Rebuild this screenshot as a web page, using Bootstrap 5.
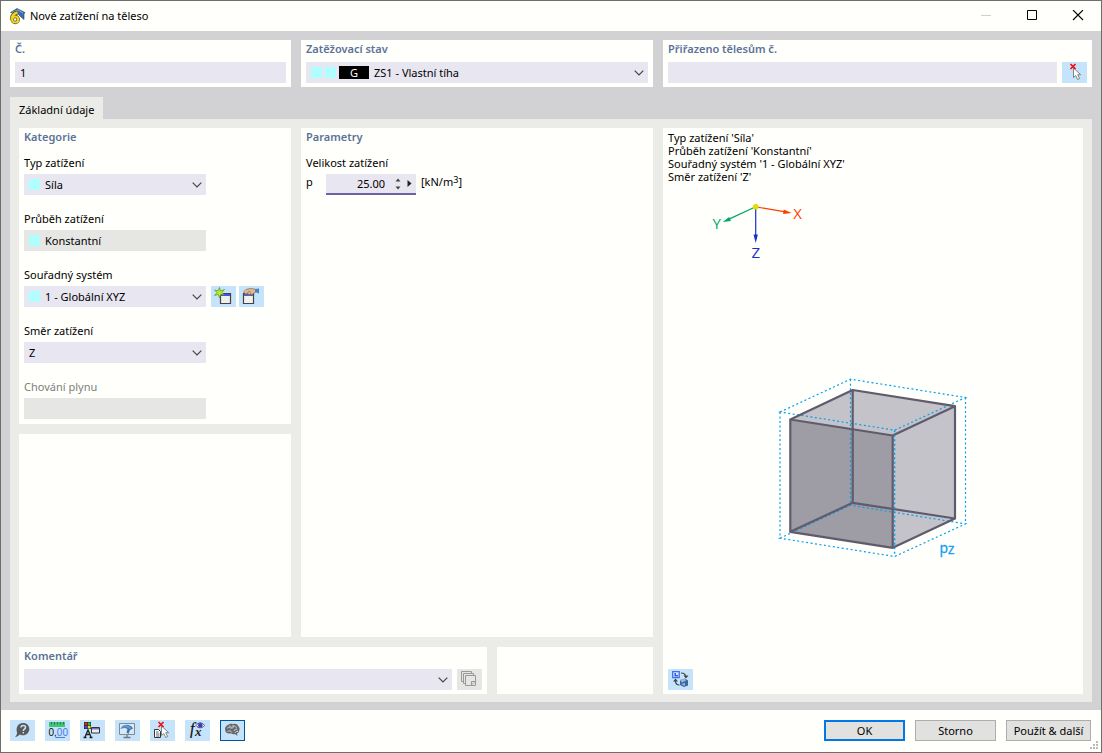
<!DOCTYPE html>
<html lang="cs">
<head>
<meta charset="utf-8">
<meta name="viewport" content="width=device-width, initial-scale=1">
<title>Nové zatížení na těleso</title>
<link href="https://cdn.jsdelivr.net/npm/bootstrap@5.3.0/dist/css/bootstrap.min.css" rel="stylesheet">
<style>
  :root { --paper:#fffffb; --frame:#d2d2d4; --sheet:#ebece8; --field:#e8e6f1; --off:#e6e6e4; --tool:#c5e3fa; --cyan:#b0ffff; --title:#5b7299; }
  body { font-family:"Noto Sans","Open Sans",sans-serif; font-size:11px; line-height:16px; color:#000; background:var(--paper); }
  .dialog { min-height:100vh; border:1px solid #6e6e6c; }
  .titlebar { height:30px; background:var(--paper); }
  .win-btn { width:46px; height:30px; border-radius:0; --bs-btn-padding-x:0; --bs-btn-padding-y:0; line-height:0; }
  .dialog-body { background:var(--frame); padding:9px 9px 8px; }
  .cols-top { display:grid; grid-template-columns:281fr 352fr 429fr; gap:10px; }
  .cols-main { display:grid; grid-template-columns:272fr 352fr 420fr; grid-template-rows:1fr auto; gap:10px; }
  .cols-note { display:grid; grid-template-columns:3fr 1fr; gap:10px; grid-column:1 / 3; }
  .preview { grid-column:3; grid-row:1 / 3; }
  .panel { background:var(--paper); padding:1px 5px 4px; min-width:0; }
  .panel h2 { font-size:11px; line-height:16px; font-weight:600; color:var(--title); margin:0 0 5px; }
  .panel-form { padding-bottom:5px; }
  .panel-form h2 { margin-bottom:10px; }
  .panel-form label { display:block; margin-bottom:3px; }
  .group + .group { margin-top:16px; }
  .group-field { width:182px; }
  .nav-tabs { --bs-nav-tabs-border-width:0; margin-top:10px; }
  .nav-tabs .nav-link { padding:5px 9px 1px; border-radius:0; background:var(--sheet) !important; color:#000 !important; }
  .sheet { background:var(--sheet); padding:9px 9px 8px; }
  .field { height:21px; background:var(--field); display:flex; align-items:center; min-width:0; }
  .field-off { background:var(--off); }
  .field .form-control, .field .form-select { border:0; border-radius:0; background-color:transparent; color:#000; font-size:11px; line-height:16px; height:21px; min-height:0; padding:0 5px; min-width:0; flex:1; }
  .field .form-select { padding-right:20px; background-position:right 4px center; background-size:10px 6px;
    background-image:url("data:image/svg+xml,%3Csvg xmlns='http://www.w3.org/2000/svg' viewBox='0 0 10 6'%3E%3Cpath d='M.7.7 5 5 9.3.7' fill='none' stroke='%23444' stroke-width='1.2'/%3E%3C/svg%3E"); }
  .field-off .form-select { background-image:none; opacity:1; }
  .swatch { width:11px; height:11px; background:var(--cyan); margin-left:5px; flex:none; }
  .swatch + .swatch { margin-left:3px; }
  .tag-g { width:30px; height:13px; line-height:13px; background:#000; color:#fff; text-align:center; margin-left:3px; flex:none; }
  .tool { width:25px; height:21px; padding:0; border:0; border-radius:0; background:var(--tool); flex:none; line-height:0; }
  .tool:disabled { background:var(--off); opacity:1; border:0; }
  .tool.active { background:var(--tool); outline:1px solid #00559f; outline-offset:-1px; }
  .spin-field { width:90px; border-bottom:2px solid #6b62a8; }
  .spin-field .form-control { height:19px; padding-right:10px; }
  .spin-btn { border:0; padding:0; background:none; line-height:0; display:block; }
  .unit sup { font-size:9px; line-height:0; top:-3px; }
  .summary { line-height:13px; padding-top:2px; padding-bottom:1px; }
  .push { width:81px; height:21px; padding:0; border:1px solid #adadad; border-radius:0; background:#e1e1df; color:#000; font-size:11px; line-height:16px; }
  .push-main { border:2px solid #0078e8; }
  .push-wide { width:85px; }
  .footer-bar { padding:10px 10px 11px 9px; background:var(--paper); }
  .grip { right:3px; bottom:3px; }
  svg { display:block; }
</style>
</head>
<body>
<svg width="0" height="0" class="position-absolute" aria-hidden="true">
  <defs>
    <g id="pointer"><path d="M11.500 6v9.500l2.200-2 2 4 2-1-2-3.800h3z" fill="#fff" stroke="#777" stroke-width=".9"/></g>
    <g id="cross"><path d="M8.500 2l5 5M13.500 2l-5 5" stroke="#f01010" stroke-width="1.700"/></g>
  </defs>
</svg>
<div class="dialog d-flex flex-column">
  <header class="titlebar d-flex align-items-center">
    <svg class="ms-2 me-1" width="17" height="17" viewBox="0 0 17 17" aria-hidden="true">
      <path d="M1.500 4.500 8 .5 16 4.500l-1 1.500v5.500L12 9 8 5z" fill="#3f6ca8" stroke="#29456f" stroke-width=".6"/>
      <path d="M3 4.500 9 2l5 3" stroke="#88a9d2" fill="none"/>
      <path d="M8.500 4.500C4.500 5.500 2.800 8 2.800 11.500" fill="none" stroke="#514a1c" stroke-width="4"/><circle cx="6.200" cy="11.500" r="3" fill="none" stroke="#514a1c" stroke-width="3.400"/>
      <path d="M8.500 4.500C4.500 5.500 2.800 8 2.800 11.500" fill="none" stroke="#f0d520" stroke-width="2.600"/><circle cx="6.200" cy="11.500" r="3" fill="none" stroke="#f0d520" stroke-width="2.200"/>
    </svg>
    <span class="me-auto">Nové zatížení na těleso</span>
    <button class="btn win-btn border-0" disabled aria-label="Minimalizovat"><svg class="mx-auto" width="12" height="12"><path d="M1 5.500h10" stroke="#b5b5b2"/></svg></button>
    <button class="btn win-btn border-0" aria-label="Maximalizovat"><svg class="mx-auto" width="12" height="12"><path d="M1.500.5h9v9h-9z" fill="none" stroke="#000"/></svg></button>
    <button class="btn win-btn border-0" aria-label="Zavřít"><svg class="mx-auto" width="12" height="12"><path d="M1 0l10 10M11 0L1 10" stroke="#000" stroke-width="1.100"/></svg></button>
  </header>

  <main class="dialog-body flex-grow-1 d-flex flex-column">
    <div class="cols-top">
      <section class="panel">
        <h2><label for="no">Č.</label></h2>
        <div class="field"><input id="no" class="form-control" value="1"></div>
      </section>
      <section class="panel">
        <h2><label for="lc">Zatěžovací stav</label></h2>
        <div class="field"><span class="swatch"></span><span class="swatch"></span><span class="tag-g">G</span>
          <select id="lc" class="form-select"><option>ZS1 - Vlastní tíha</option></select></div>
      </section>
      <section class="panel">
        <h2><label for="solids">Přiřazeno tělesům č.</label></h2>
        <div class="d-flex">
          <div class="field flex-grow-1"><input id="solids" class="form-control"></div>
          <button class="btn tool" style="margin-left:5px" aria-label="Vybrat tělesa"><svg width="25" height="21"><use href="#pointer"/><use href="#cross"/></svg></button>
        </div>
      </section>
    </div>

    <ul class="nav nav-tabs">
      <li class="nav-item"><a class="nav-link active" href="#base">Základní údaje</a></li>
    </ul>

    <div id="base" class="sheet cols-main flex-grow-1">
      <div class="d-flex flex-column" style="gap:10px">
        <section class="panel panel-form">
          <h2>Kategorie</h2>
          <div class="group">
            <label for="type">Typ zatížení</label>
            <div class="field group-field"><span class="swatch"></span><select id="type" class="form-select"><option>Síla</option></select></div>
          </div>
          <div class="group">
            <label for="dist">Průběh zatížení</label>
            <div class="field field-off group-field"><span class="swatch"></span><select id="dist" class="form-select" disabled><option>Konstantní</option></select></div>
          </div>
          <div class="group">
            <label for="cs">Souřadný systém</label>
            <div class="d-flex">
              <div class="field group-field"><span class="swatch"></span><select id="cs" class="form-select"><option>1 - Globální XYZ</option></select></div>
              <button class="btn tool" style="margin:0 3px 0 5px" aria-label="Nový souřadný systém"><svg width="25" height="21">
                <path d="M9.500 7.500h10v10h-10z" fill="#efefef" stroke="#444" stroke-width="1.200"/><path d="M10 8h9v2h-9z" fill="#3a55e8"/>
                <path d="M8.500 1.500 9.500 5l4-1.500-2.500 3 2.500 2.500-3.700-.6L8.500 12l-1-3.600L3.500 9.500 6 6.500 3.500 4l3.700.8z" fill="#b9f01c" stroke="#448030" stroke-width=".6"/></svg></button>
              <button class="btn tool" aria-label="Upravit souřadný systém"><svg width="25" height="21">
                <path d="M4.500 7.500h10v10h-10z" fill="#f2f2f2" stroke="#444" stroke-width="1.200"/><path d="M5 8h9v2H5z" fill="#4d6ba8"/>
                <path d="M4.500 6 7 3.500l4-1 5 .5 1 3-3 1.500-1 1.500-1.500-1.500L10 9 9 7.500 6.500 8z" fill="#e2b996" stroke="#8e6a50" stroke-width=".7"/><path d="M9 5l3 1M8 6.500l2 .5" stroke="#8e6a50" stroke-width=".6"/><path d="M16 3l4-.5v5L16 6z" fill="#4b84c4"/></svg></button>
            </div>
          </div>
          <div class="group">
            <label for="dir">Směr zatížení</label>
            <div class="field group-field"><select id="dir" class="form-select"><option>Z</option></select></div>
          </div>
          <div class="group">
            <label for="gas" style="color:#808080">Chování plynu</label>
            <div class="field field-off group-field"><select id="gas" class="form-select" disabled><option></option></select></div>
          </div>
        </section>
        <section class="panel flex-grow-1"></section>
      </div>

      <section class="panel panel-form">
        <h2>Parametry</h2>
        <label for="mag">Velikost zatížení</label>
        <div class="d-flex align-items-start">
          <span style="width:20px">p</span>
          <div class="field spin-field">
            <input id="mag" class="form-control text-end" value="25.00">
            <div class="d-flex flex-column" style="gap:4px">
              <button class="spin-btn" aria-label="Zvýšit"><svg width="7" height="4"><path d="M.5 3.500h5L3 .5z" fill="#444"/></svg></button>
              <button class="spin-btn" aria-label="Snížit"><svg width="7" height="4"><path d="M.5.5h5L3 3.500z" fill="#444"/></svg></button>
            </div>
            <button class="spin-btn" style="margin:0 4px 0 5px" aria-label="Další možnosti"><svg width="5" height="7"><path d="M.5 0v7L4.500 3.500z" fill="#222"/></svg></button>
          </div>
          <span class="unit" style="margin-left:5px">[kN/m<sup>3</sup>]</span>
        </div>
      </section>

      <div class="cols-note">
        <section class="panel">
          <h2><label for="note">Komentář</label></h2>
          <div class="d-flex">
            <div class="field flex-grow-1"><select id="note" class="form-select"><option></option></select></div>
            <button class="btn tool" style="margin-left:5px" disabled aria-label="Převzít komentář"><svg width="25" height="21" fill="#e6e6e4" stroke="#999">
              <path d="M4.500 2.500h10v10h-10z"/><path d="M6.500 4.500h10v10h-10z"/><path d="M8.500 6.500h10v10h-10z"/><path d="M14.500 16.500v-4h4"/><path d="M14.500 16l4-4" stroke-width=".8"/></svg></button>
          </div>
        </section>
        <section class="panel"></section>
      </div>

      <section class="panel preview d-flex flex-column align-items-start">
        <div class="summary">Typ zatížení 'Síla'<br>Průběh zatížení 'Konstantní'<br>Souřadný systém '1 - Globální XYZ'<br>Směr zatížení 'Z'</div>
        <svg class="w-100 flex-grow-1" viewBox="668 184 410 484" role="img" aria-label="Těleso se zatížením pZ" font-family="Open Sans, sans-serif">
          <g stroke-width="1.200">
            <path d="M755.700 206.300 784 211.200" stroke="#ff3c00"/><path d="M791.500 212.400l-8.500 1 .8-4.400z" fill="#ff3c00"/>
            <path d="M755.700 206.300 729 218.600" stroke="#00a66c"/><path d="M722.800 221.400l6.300-5 1.900 4z" fill="#00a66c"/>
            <path d="M755.700 206.300V235" stroke="#1432c8"/><path d="M755.700 242.500l-2.200-8.500h4.400z" fill="#1432c8"/>
          </g>
          <circle cx="755.700" cy="206.300" r="2.800" fill="#dede00"/>
          <g font-size="15" text-anchor="middle">
            <text x="797.700" y="218" fill="#ff3c00">X</text><text x="716.700" y="228" fill="#00a66c">Y</text><text x="755.700" y="257" fill="#1432c8">Z</text>
          </g>
          <path d="M790.300 419 852.700 389.500 955 405.700V518l-62.300 29.300L790.300 531.300z" fill="#c4c3c9"/>
          <path d="M790.300 419l102.400 16v112.300l-102.400-16z" fill="#9e9ca5"/>
          <g fill="none" stroke="#00a0f0" stroke-width="1.200" stroke-dasharray="2 2.500">
            <path d="M780 411.500 850.500 378.700 965.500 397 894.600 429.700z"/><path d="M780 537.700 850.500 504.700 965.500 523.400 894.600 556z"/>
            <path d="M780 411.500v126.200M850.500 378.700v126M965.500 397v126.400"/>
          </g>
          <g fill="none" stroke="#5f5b6c" stroke-width="2.200" stroke-linejoin="round">
            <path d="M790.300 419 852.700 389.500 955 405.700 892.700 435z"/><path d="M790.300 531.300 852.700 502.300 955 518 892.700 547.300z"/>
            <path d="M790.300 419v112.300M852.700 389.500v112.800M955 405.700V518M892.700 435v112.300"/>
          </g>
          <path d="M894.600 429.700V556" stroke="#00a0f0" stroke-width="1.400" stroke-dasharray="2 2.500"/>
          <text x="939.500" y="552" font-size="14" fill="#0a9cf0" stroke="#0a9cf0" stroke-width=".3">p<tspan font-size="11" dy="1">Z</tspan></text>
        </svg>
        <button class="btn tool" aria-label="Přepnout zobrazení"><svg width="25" height="21">
          <path d="M4.700 2.700h6.500v6H4.700z" fill="#dce8ff" stroke="#3f6ff0" stroke-width="1.300"/><path d="M6.500 4v3.500H10V6H8V4z" fill="#2f5fe0"/>
          <path d="M13 4c3 0 4.500 1 4.500 3.500M7.500 12c0 3 1.500 4 4 4" fill="none" stroke="#444" stroke-width="1.200"/><path d="M15.500 6.500h5L18 9.500zM5 12.500h5L7.500 9.500z" fill="#444"/>
          <path d="M12 11l5-1.500 3 2v5l-4 1.500-4-2z" fill="#3f679e"/><path d="M12 11l5-1.500 1 2-4 2zM13 15l4-1v3z" fill="#9ab9df"/></svg></button>
      </section>
    </div>
  </main>

  <footer class="footer-bar d-flex position-relative">
    <div class="d-flex me-auto" style="gap:10px">
      <button class="btn tool" aria-label="Nápověda"><svg width="25" height="21"><path d="M13 3c4 0 6.300 2.700 6.300 6s-2.800 6.300-6.300 6.300c-1.500 0-2.500-.3-3.300-.8C8.500 16 7 16.800 5 17c1.500-1.200 2-2.500 2-4.500C5.500 7 8.500 3 13 3z" fill="#5a5a5a"/><path d="M11 7.500c0-2.800 4.500-2.600 4.500 0 0 1.700-2.200 1.600-2.200 3.400M13.300 12v1.600" fill="none" stroke="#c5e3fa" stroke-width="1.500"/></svg></button>
      <button class="btn tool" aria-label="Jednotky a desetinná místa"><svg width="25" height="21"><path d="M4 2h16v5H4z" fill="#43c477"/><path d="M6.500 2v2.500M9.500 2v2.500M12.500 2v2.500M15.500 2v2.500M18.500 2v2.500" stroke="#187c40" stroke-width=".9"/><text x="3.500" y="16" font-size="10" font-family="Liberation Sans, sans-serif" fill="#111">0,<tspan fill="#4878e8">00</tspan></text><path d="M11 17.500h9" stroke="#4878e8"/></svg></button>
      <button class="btn tool" aria-label="Zobrazení"><svg width="25" height="21"><path d="M4 2h7v7H4z" fill="#222"/><path d="M4.500 2.500h2.700v2.700H4.500z" fill="#f02020"/><path d="M7.800 2.500h2.700v2.700H7.800z" fill="#20c040"/><path d="M4.500 5.800h2.700v2.700H4.500z" fill="#3050f0"/><path d="M7.800 5.800h2.700v2.700H7.800z" fill="#f0e020"/><path d="M11.500 7.500h8v5.500h-8z" fill="#eee" stroke="#333"/><path d="M12 8h7v1.500h-7z" fill="#7070e0"/><path d="M5 17l3-7 3 7M6 14.500h4M3.500 17.500h3M9.500 17.500h3" fill="none" stroke="#222" stroke-width="1.300"/></svg></button>
      <button class="btn tool" aria-label="Pracovní plocha"><svg width="25" height="21"><path d="M4.500 3.500h15v11h-15z" fill="#d5eafa" stroke="#888"/><path d="M12 15v2.500M8.500 17.500h7" stroke="#777" stroke-width="1.300"/><path d="M5.500 9c2-5.500 9.500-5.500 12.500-.5l-3 1.500-1.500 4-2-1.500 1-3.500c-2-1.500-4-1.500-7 0z" fill="#3e74ae"/><path d="M6 8c3-2 7-1.500 9 1M9 5.500c4 0 6 2 7 3" fill="none" stroke="#8fb9de" stroke-width=".7"/></svg></button>
      <button class="btn tool" aria-label="Výběr"><svg width="25" height="21"><path d="M4.500 9.500h4l2 2v6h-6z" fill="#fff" stroke="#333"/><path d="M6 12h2.500M6 14h3.500M6 16h3.500" stroke="#333" stroke-width=".8"/><use href="#pointer"/><use href="#cross"/></svg></button>
      <button class="btn tool" aria-label="Vzorce"><svg width="25" height="21"><text x="5" y="14" font-size="16" font-style="italic" font-family="Liberation Serif, serif" fill="#111" stroke="#111" stroke-width=".2">f</text><text x="10" y="16" font-size="13" font-style="italic" font-weight="bold" font-family="Liberation Serif, serif" fill="#222">x</text><path d="M11 5.500c2.500-3.500 6-3.500 8.500 0-2.500 3-6 3-8.500 0z" fill="#fff" stroke="#335" stroke-width=".9"/><circle cx="15.300" cy="5.300" r="2.300" fill="#4038b8"/></svg></button>
      <button class="btn tool active" aria-label="Umělá inteligence"><svg width="25" height="21"><path d="M5 9c0-2 1.500-3.500 3-4 1.500-1.500 3.500-1.500 5-.8 2-.9 4.500 0 5 1.800 1.800 1.200 2 3.500 1 5-.2 1.500-1 2-2 2.500l.5 2.500-2.500-2c-1.500.5-3 .2-4-.7C8 14 5.500 13 5.500 11z" fill="#666"/><path d="M7 8.500c2-2 3-1 4 0M9 6c2 0 3 1 3 3M7.500 11.500c2-1.500 3.500-.5 4.500 1M13 6.500c2-1 3.500 0 3.500 2M14 11c0-2 2.500-2 3.500-1M13 5v3M15 13c0-1 1.500-2 3-1.500" fill="none" stroke="#d5eafa" stroke-width=".8"/></svg></button>
    </div>
    <div class="d-flex align-items-start pt-px" style="gap:10px">
      <button class="btn push push-main">OK</button>
      <button class="btn push">Storno</button>
      <button class="btn push push-wide text-nowrap">Použít &amp; další</button>
    </div>
    <svg class="grip position-absolute" width="8" height="8" fill="#bbb" aria-hidden="true"><path d="M6 0h2v2H6zM3 3h2v2H3zM6 3h2v2H6zM0 6h2v2H0zM3 6h2v2H3zM6 6h2v2H6z"/></svg>
  </footer>
</div>
<script src="https://cdn.jsdelivr.net/npm/bootstrap@5.3.0/dist/js/bootstrap.bundle.min.js"></script>
</body>
</html>
